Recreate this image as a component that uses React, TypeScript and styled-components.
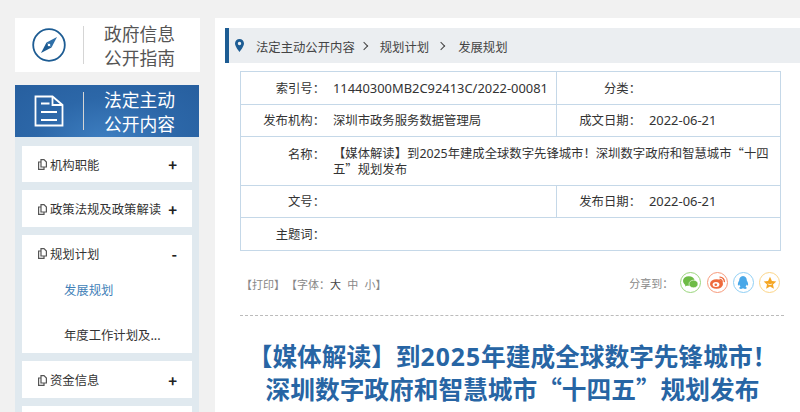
import React, { FC } from "react";
import styled, { createGlobalStyle } from "styled-components";

const GlobalStyle = createGlobalStyle`
  html, body {
    margin: 0;
    padding: 0;
    height: 412px;
    overflow: hidden;
    background: #f1f1f1;
    font-family: "Noto Sans CJK SC", "Noto Sans", sans-serif;
  }
`;

const DocIcon: FC = () => (
  <svg width="9" height="11" viewBox="0 0 9 11" fill="none" stroke="#555" strokeWidth="1.2">
    <path d="M3 .6h3l2.400 2.400v5h-5.400z" />
    <path d="M3 3h-2.400v7.400h5.400v-2.400" />
  </svg>
);

const menu = [
  { label: "机构职能", sign: "+" },
  { label: "政策法规及政策解读", sign: "+" },
  { label: "规划计划", sign: "-", subs: ["发展规划", "年度工作计划及..."] },
  { label: "资金信息", sign: "+" },
];

const App: FC = () => {
  return (
    <Page>
      <GlobalStyle />
      <Side>
        <GuideBox>
          <GuideIconCell>
            <svg width="36" height="36" viewBox="0 0 36 36">
              <circle cx="18" cy="18" r="15.800" fill="none" stroke="#1d5c93" strokeWidth="1.800" />
              <path d="M26 10L15.500 15.500L20.500 20.500z" fill="#2f6fa8" />
              <path d="M10 26L15.500 15.500L20.500 20.500z" fill="#1d5c93" />
              <circle cx="18" cy="18" r="1.300" fill="#fff" />
            </svg>
          </GuideIconCell>
          <GuideText>
            政府信息
            <br />
            公开指南
          </GuideText>
        </GuideBox>
        <Panel>
          <PanelHead>
            <GuideIconCell>
              <svg width="30" height="32" viewBox="0 0 30 32" fill="none" stroke="#fff" strokeWidth="1.800">
                <path d="M1.500 1.500h17l10 8.500v20.500h-27z" />
                <path d="M18.500 2v8h9.500M7 8.500h8.500M7 17h16M7 25h16" />
              </svg>
            </GuideIconCell>
            <PanelTitle>
              法定主动
              <br />
              公开内容
            </PanelTitle>
          </PanelHead>
          <Menu>
            {menu.map((m) => (
              <MenuCard key={m.label}>
                <MenuRow>
                  <DocIcon />
                  <MenuLabel>{m.label}</MenuLabel>
                  <Sign>{m.sign}</Sign>
                </MenuRow>
                {m.subs?.map((s, i) => (
                  <SubItem key={s} $active={i === 0}>
                    {s}
                  </SubItem>
                ))}
              </MenuCard>
            ))}
            <MenuCard />
          </Menu>
        </Panel>
      </Side>
      <Main>
        <Crumbs>
          <svg width="9" height="13" viewBox="0 0 9 13">
            <path
              fillRule="evenodd"
              d="M4.500 0C2 0 0 2 0 4.500C0 7.500 4.500 13 4.500 13S9 7.500 9 4.500C9 2 7 0 4.500 0zM4.500 6.200a1.700 1.700 0 1 1 0-3.400a1.700 1.700 0 0 1 0 3.400z"
              fill="#1d5c93"
            />
          </svg>
          <Crumb>法定主动公开内容</Crumb>
          <Arrow />
          <Crumb>规划计划</Crumb>
          <Arrow $wide />
          <Crumb>发展规划</Crumb>
        </Crumbs>
        <Meta>
          <Label>索引号：</Label>
          <Value $num>11440300MB2C92413C/2022-00081</Value>
          <Label $left>分类：</Label>
          <Value />
          <Label>发布机构：</Label>
          <Value>深圳市政务服务数据管理局</Value>
          <Label $left>成文日期：</Label>
          <Value $num>2022-06-21</Value>
          <Label $tall>名称：</Label>
          <WideValue>
            【媒体解读】到<Latin>2025</Latin>年建成全球数字先锋城市！深圳数字政府和智慧城市“十四五”规划发布
          </WideValue>
          <Label>文号：</Label>
          <Value />
          <Label $left>发布日期：</Label>
          <Value $num>2022-06-21</Value>
          <Label>主题词：</Label>
          <WideValue />
        </Meta>
        <Tools>
          <ToolText>
            <ToolGroup>【打印】</ToolGroup>
            <ToolGroup>
              【字体：<FontBtn $on>大</FontBtn>
              <FontBtn>中</FontBtn>
              <FontBtn>小</FontBtn>】
            </ToolGroup>
          </ToolText>
          <Share>
            <ShareLabel>分享到：</ShareLabel>
            <ShareBtn $c="#9ad67c">
              <svg width="15" height="13" viewBox="0 0 15 13" fill="#6dbb45">
                <ellipse cx="5.800" cy="5" rx="5.800" ry="4.800" />
                <path d="M2.500 8L2 10.500L5 9z" />
                <ellipse cx="10.500" cy="8" rx="4.500" ry="3.800" stroke="#fff" strokeWidth="0.600" />
              </svg>
            </ShareBtn>
            <ShareBtn $c="#f79a7b">
              <svg width="15" height="13" viewBox="0 0 15 13">
                <ellipse cx="6.500" cy="8" rx="6.500" ry="4.800" fill="#ee6a3c" />
                <ellipse cx="6" cy="8.500" rx="3.400" ry="2.500" fill="#fff" />
                <circle cx="5.800" cy="8.700" r="1.300" fill="#ee6a3c" />
                <path d="M9.500 1.200a4.400 4.400 0 0 1 4.800 5M9.500 3.500a2.200 2.200 0 0 1 2.500 2.800" fill="none" stroke="#ee6a3c" strokeWidth="1.300" />
              </svg>
            </ShareBtn>
            <ShareBtn $c="#8fcff5">
              <svg width="12" height="14" viewBox="0 0 12 14" fill="#4aa8e8">
                <path d="M6 0C3.300 0 2.200 2.200 2.200 4.500C1.200 6 .5 7.800 1 9.500C1.500 9.700 2 9 2.300 8.500C2.500 9.500 3 10.300 3.500 10.800C2.500 11.200 2 11.800 2.500 12.500C3.500 13.300 5 12.800 6 12.200C7 12.800 8.500 13.300 9.500 12.500C10 11.800 9.500 11.200 8.500 10.800C9 10.300 9.500 9.500 9.700 8.500C10 9 10.500 9.700 11 9.500C11.500 7.800 10.800 6 9.800 4.500C9.800 2.200 8.700 0 6 0z" />
              </svg>
            </ShareBtn>
            <ShareBtn $c="#fcd588">
              <svg width="14" height="14" viewBox="0 0 14 14">
                <path d="M7 .8L8.900 4.900L13.300 5.400L10 8.400L10.900 12.800L7 10.600L3.100 12.800L4 8.400L.7 5.400L5.100 4.900z" fill="#f5a623" />
                <path d="M4.800 7.800C6 8.800 8 8.800 9.200 7.800" fill="none" stroke="#fff" strokeWidth="0.800" />
              </svg>
            </ShareBtn>
          </Share>
        </Tools>
        <Rule />
        <Headline>
          【媒体解读】到<HeadNum>2025</HeadNum>年建成全球数字先锋城市！
          <br />
          深圳数字政府和智慧城市“十四五”规划发布
        </Headline>
      </Main>
    </Page>
  );
};

export default App;

const Page = styled.div`
  display: flex;
  align-items: flex-start;
  gap: 15px;
  height: 412px;
  padding: 18px 0 0 15px;
  box-sizing: border-box;
  overflow: hidden;
`;

const Side = styled.div`
  flex: none;
  width: 185px;
`;

const GuideBox = styled.div`
  display: flex;
  align-items: center;
  height: 54px;
  background: #fff;
`;

const GuideIconCell = styled.div`
  display: flex;
  align-items: center;
  justify-content: center;
  flex: none;
  width: 69px;
  height: 38px;
  margin-right: 20px;
  padding-right: 1px;
  box-sizing: border-box;
  border-right: 1px solid #d5d5d5;
`;

const GuideText = styled.div`
  font-size: 17.800px;
  line-height: 24px;
  color: #555;
`;

const Panel = styled.div`
  width: 184px;
  margin-top: 12.500px;
  background: #e0e9ef;
`;

const PanelHead = styled.div`
  display: flex;
  align-items: center;
  height: 52.500px;
  background: radial-gradient(ellipse at 50% 110%, #3f80c2 0%, #2c67a8 55%, #275f9f 100%);
`;

const PanelTitle = styled(GuideText)`
  color: #fff;
`;

const Menu = styled.div`
  display: flex;
  flex-direction: column;
  gap: 7.700px;
  padding: 8.700px 7px 0;
`;

const MenuCard = styled.div`
  background: #fff;
  min-height: 36.800px;
`;

const MenuRow = styled.div`
  display: flex;
  align-items: center;
  height: 36.800px;
  padding: 1px 15px 0 16px;
  box-sizing: border-box;
`;

const MenuLabel = styled.span`
  flex: 1;
  margin-left: 3px;
  font-size: 12.350px;
  color: #333;
  white-space: nowrap;
`;

const Sign = styled.span`
  font-size: 15px;
  font-weight: 700;
  color: #222;
`;

const SubItem = styled.div<{ $active?: boolean }>`
  display: flex;
  align-items: center;
  height: 37px;
  padding: 1px 0 0 42px;
  box-sizing: border-box;
  font-size: 12.350px;
  color: ${(p) => (p.$active ? "#3f7fb8" : "#333")};

  & + & {
    margin-top: 8px;
  }
`;

const Main = styled.div`
  flex: 1;
  min-width: 0;
  height: 394px;
  padding-left: 10px;
  background: #fff;
  box-sizing: border-box;
`;

const Crumbs = styled.div`
  display: flex;
  align-items: center;
  height: 35px;
  margin-top: 10px;
  padding-left: 6px;
  background: #ebeef1;
  border-left: 4px solid #1d5c93;
`;

const Crumb = styled.span`
  margin: 2px 0 0 12px;
  font-size: 12.350px;
  color: #444;
`;

const Arrow = styled.i<{ $wide?: boolean }>`
  width: 5px;
  height: 5px;
  margin-left: ${(p) => (p.$wide ? "9px" : "6px")};
  margin-right: ${(p) => (p.$wide ? "2px" : "1px")};
  border-top: 1.500px solid #444;
  border-right: 1.500px solid #444;
  transform: rotate(45deg);
`;

const Meta = styled.div`
  display: grid;
  grid-template-columns: 84px 231px 85px 1fr;
  grid-template-rows: 32.500px 32.500px 48.500px 32.500px 32.500px;
  width: 541px;
  margin: 8px 0 0 15px;
  box-sizing: border-box;
  border: 1px solid #c5d8e8;
  border-bottom: 0;
  font-size: 12.350px;
  color: #333;
`;

const Label = styled.div<{ $left?: boolean; $tall?: boolean }>`
  display: flex;
  justify-content: flex-end;
  align-items: ${(p) => (p.$tall ? "flex-start" : "center")};
  padding-top: ${(p) => (p.$tall ? "7.500px" : "0")};
  white-space: nowrap;
  border-bottom: 1px solid #c5d8e8;
  border-left: ${(p) => (p.$left ? "1px solid #c5d8e8" : "0")};
`;

const Value = styled.div<{ $num?: boolean }>`
  display: flex;
  align-items: center;
  padding-left: 8px;
  font-family: "Noto Sans", "Noto Sans CJK SC", sans-serif;
  font-size: ${(p) => (p.$num ? "12.900px" : "12.350px")};
  white-space: nowrap;
  border-bottom: 1px solid #c5d8e8;
`;

const WideValue = styled.div`
  grid-column: span 3;
  display: block;
  align-self: stretch;
  padding: 9px 4px 0 8px;
  line-height: 15.500px;
  border-bottom: 1px solid #c5d8e8;
`;

const Latin = styled.span`
  font-family: "Noto Sans", sans-serif;
  line-height: 1;
`;

const HeadNum = styled(Latin)`
  letter-spacing: 1px;
`;

const Tools = styled.div`
  display: flex;
  justify-content: space-between;
  align-items: center;
  height: 24px;
  margin-top: 21px;
  padding: 0 20px 0 16px;
`;

const ToolText = styled.div`
  display: flex;
  gap: 1px;
  font-size: 11px;
  color: #888;
`;

const ToolGroup = styled.span`
  white-space: nowrap;
`;

const FontBtn = styled.span<{ $on?: boolean }>`
  margin-right: 6.300px;
  color: ${(p) => (p.$on ? "#444" : "#888")};

  &:last-child {
    margin-right: 0;
  }
`;

const Share = styled.div`
  display: flex;
  align-items: center;
  gap: 5.200px;
  margin-top: -2px;
`;

const ShareLabel = styled.span`
  margin-right: 2px;
  font-size: 11px;
  color: #888;
`;

const ShareBtn = styled.span<{ $c: string }>`
  display: flex;
  align-items: center;
  justify-content: center;
  width: 21px;
  height: 21px;
  box-sizing: border-box;
  border: 1.500px solid ${(p) => p.$c};
  border-radius: 50%;
`;

const Rule = styled.div`
  width: 544px;
  margin: 19px 0 0 15px;
  border-top: 1px dashed #bbb;
`;

const Headline = styled.h1`
  margin: 23px 0 0;
  text-align: center;
  font-size: 24.700px;
  line-height: 33px;
  font-weight: 700;
  color: #2765a4;
  white-space: nowrap;
`;
